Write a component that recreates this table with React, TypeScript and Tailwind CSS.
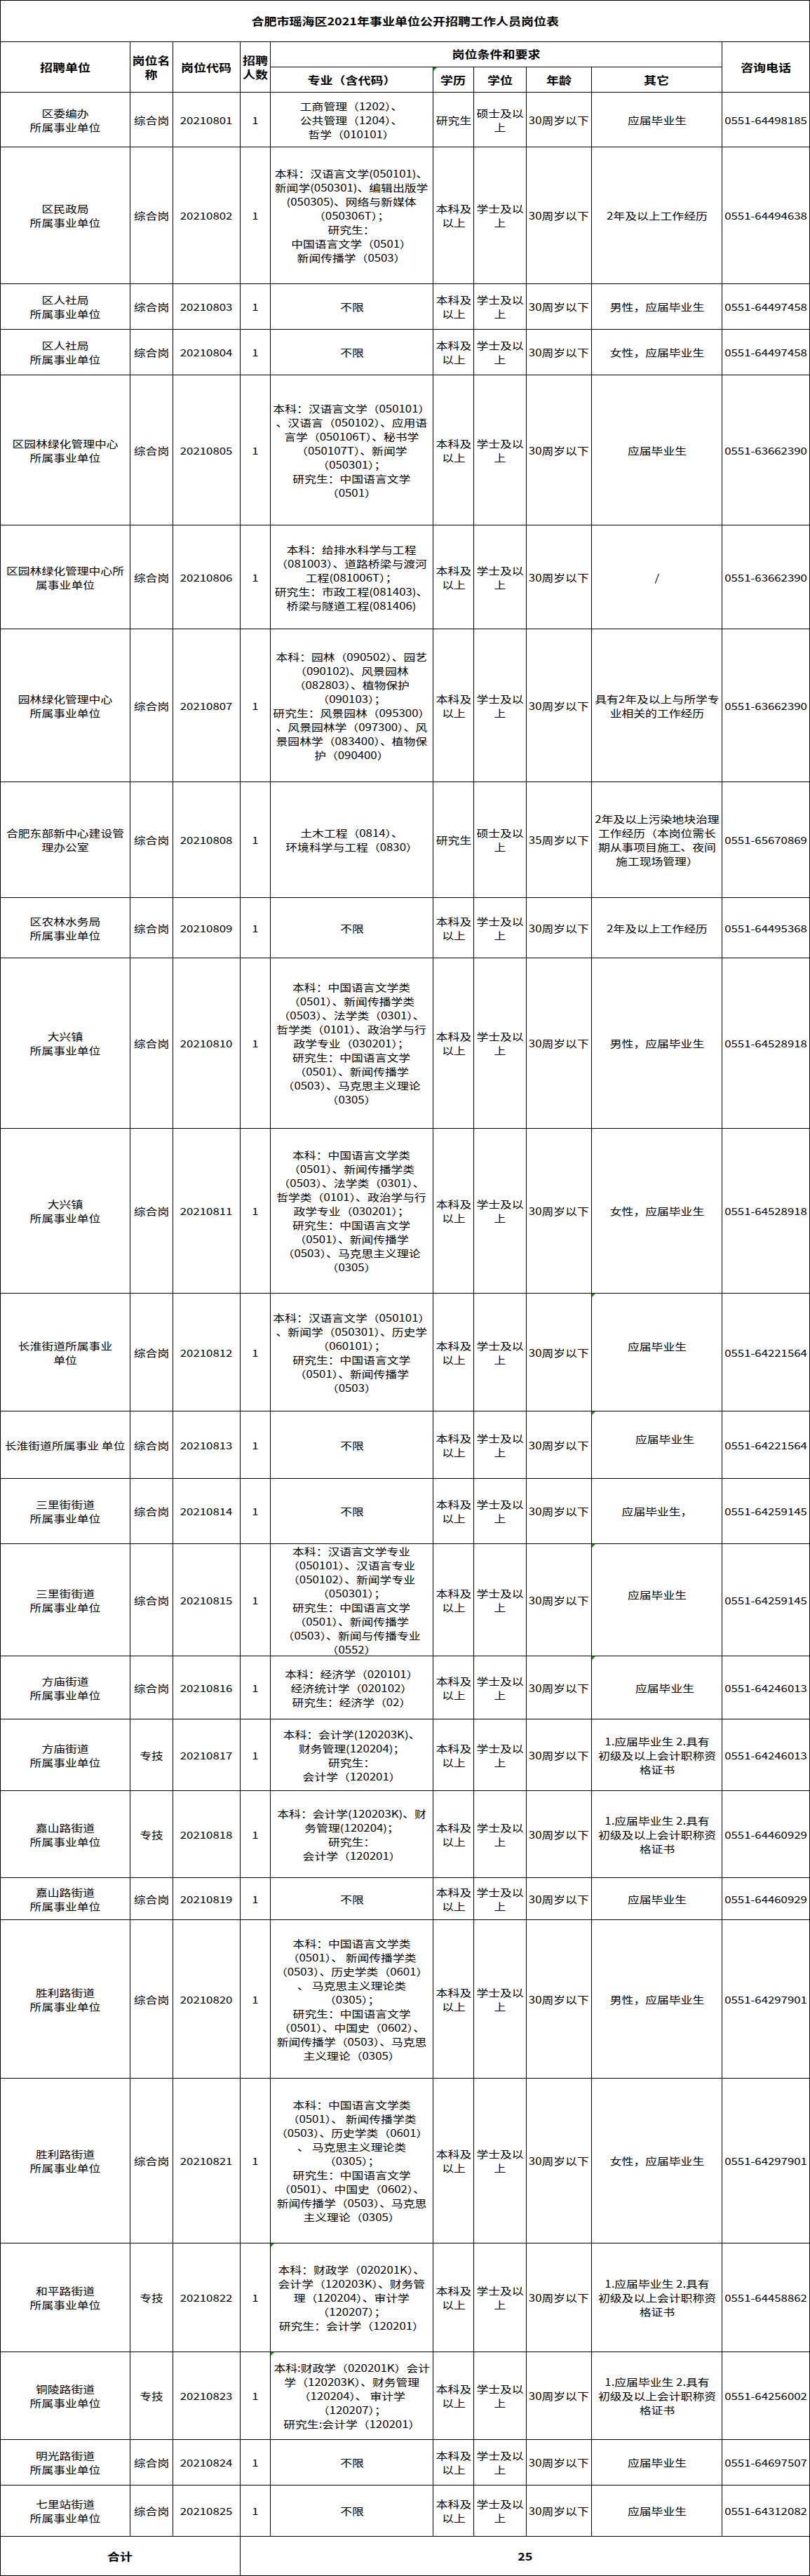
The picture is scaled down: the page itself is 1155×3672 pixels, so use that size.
import React from "react";
import clsx from "clsx";

type Row = {
  h: string;
  unit: string[];
  code: string;
  spec: string[];
  other: string[];
  phone: string;
  name?: string;
  edu?: string[];
  deg?: string[];
  age?: string;
  otherCls?: string;
  mark?: "spec" | "other";
};

const COLS = [
  "w-[185px]",
  "w-[61px]",
  "w-[96px]",
  "w-[43px]",
  "w-[232px]",
  "w-[58px]",
  "w-[75px]",
  "w-[93px]",
  "w-[186px]",
  "w-[125px]",
];

const SUOSHU = "所属事业单位";
const DAXING = [
  "本科：中国语言文学类",
  "（0501）、新闻传播学类",
  "（0503）、法学类（0301）、",
  "哲学类（0101）、政治学与行",
  "政学专业（030201）；",
  "研究生：中国语言文学",
  "（0501）、新闻传播学",
  "（0503）、马克思主义理论",
  "（0305）",
];
const SHENGLI = [
  "本科：中国语言文学类",
  "（0501）、 新闻传播学类",
  "（0503）、历史学类（0601）",
  "、 马克思主义理论类",
  "（0305）；",
  "研究生：中国语言文学",
  "（0501）、中国史（0602）、",
  "新闻传播学（0503）、马克思",
  "主义理论（0305）",
];
const KUAIJI = ["1.应届毕业生 2.具有", "初级及以上会计职称资", "格证书"];

const rows: Row[] = [
  {
    h: "h-[78px]",
    unit: ["区委编办", SUOSHU],
    code: "20210801",
    spec: ["工商管理（1202）、", "公共管理（1204）、", "哲学（010101）"],
    edu: ["研究生"],
    deg: ["硕士及以", "上"],
    other: ["应届毕业生"],
    phone: "0551-64498185",
  },
  {
    h: "h-[195px]",
    unit: ["区民政局", SUOSHU],
    code: "20210802",
    spec: [
      "本科：汉语言文学(050101)、",
      "新闻学(050301)、编辑出版学",
      "(050305)、网络与新媒体",
      "（050306T）；",
      "研究生：",
      "中国语言文学（0501）",
      "新闻传播学（0503）",
    ],
    other: ["2年及以上工作经历"],
    phone: "0551-64494638",
  },
  {
    h: "h-[65px]",
    unit: ["区人社局", SUOSHU],
    code: "20210803",
    spec: ["不限"],
    other: ["男性，应届毕业生"],
    phone: "0551-64497458",
  },
  {
    h: "h-[65px]",
    unit: ["区人社局", SUOSHU],
    code: "20210804",
    spec: ["不限"],
    other: ["女性，应届毕业生"],
    phone: "0551-64497458",
  },
  {
    h: "h-[214px]",
    unit: ["区园林绿化管理中心", SUOSHU],
    code: "20210805",
    spec: [
      "本科：汉语言文学（050101）",
      "、汉语言（050102）、应用语",
      "言学（050106T）、秘书学",
      "（050107T）、新闻学",
      "（050301）；",
      "研究生：中国语言文学",
      "（0501）",
    ],
    other: ["应届毕业生"],
    phone: "0551-63662390",
  },
  {
    h: "h-[148px]",
    unit: ["区园林绿化管理中心所", "属事业单位"],
    code: "20210806",
    spec: [
      "本科：给排水科学与工程",
      "（081003）、道路桥梁与渡河",
      "工程(081006T）；",
      "研究生：市政工程(081403)、",
      "桥梁与隧道工程(081406)",
    ],
    other: ["/"],
    phone: "0551-63662390",
  },
  {
    h: "h-[218px]",
    unit: ["园林绿化管理中心", SUOSHU],
    code: "20210807",
    spec: [
      "本科：园林（090502）、园艺",
      "（090102)、风景园林",
      "（082803）、植物保护",
      "（090103）；",
      "研究生：风景园林（095300）",
      "、风景园林学（097300）、风",
      "景园林学（083400）、植物保",
      "护（090400）",
    ],
    other: ["具有2年及以上与所学专", "业相关的工作经历"],
    phone: "0551-63662390",
  },
  {
    h: "h-[165px]",
    unit: ["合肥东部新中心建设管", "理办公室"],
    code: "20210808",
    spec: ["土木工程（0814）、", "环境科学与工程（0830）"],
    edu: ["研究生"],
    deg: ["硕士及以", "上"],
    age: "35周岁以下",
    other: ["2年及以上污染地块治理", "工作经历（本岗位需长", "期从事项目施工、夜间", "施工现场管理）"],
    phone: "0551-65670869",
  },
  {
    h: "h-[86px]",
    unit: ["区农林水务局", SUOSHU],
    code: "20210809",
    spec: ["不限"],
    other: ["2年及以上工作经历"],
    phone: "0551-64495368",
  },
  {
    h: "h-[243px]",
    unit: ["大兴镇", SUOSHU],
    code: "20210810",
    spec: DAXING,
    other: ["男性，应届毕业生"],
    phone: "0551-64528918",
  },
  {
    h: "h-[235px]",
    unit: ["大兴镇", SUOSHU],
    code: "20210811",
    spec: DAXING,
    other: ["女性，应届毕业生"],
    phone: "0551-64528918",
  },
  {
    h: "h-[168px]",
    unit: ["长淮街道所属事业", "单位"],
    code: "20210812",
    spec: [
      "本科：汉语言文学（050101）",
      "、新闻学（050301）、历史学",
      "（060101）；",
      "研究生：中国语言文学",
      "（0501）、新闻传播学",
      "（0503）",
    ],
    other: ["应届毕业生"],
    otherCls: "pb-[18px]",
    mark: "other",
    phone: "0551-64221564",
  },
  {
    h: "h-[96px]",
    unit: ["长淮街道所属事业 单位"],
    code: "20210813",
    spec: ["不限"],
    other: ["应届毕业生"],
    otherCls: "pb-[18px] pl-[22px]",
    mark: "other",
    phone: "0551-64221564",
  },
  {
    h: "h-[93px]",
    unit: ["三里街街道", SUOSHU],
    code: "20210814",
    spec: ["不限"],
    other: ["应届毕业生，"],
    phone: "0551-64259145",
  },
  {
    h: "h-[160px]",
    unit: ["三里街街道", SUOSHU],
    code: "20210815",
    spec: [
      "本科：汉语言文学专业",
      "（050101）、汉语言专业",
      "（050102）、新闻学专业",
      "（050301）；",
      "研究生：中国语言文学",
      "（0501）、新闻传播学",
      "（0503）、新闻与传播专业",
      "（0552）",
    ],
    other: ["应届毕业生"],
    otherCls: "pb-[16px]",
    mark: "other",
    phone: "0551-64259145",
  },
  {
    h: "h-[90px]",
    unit: ["方庙街道", SUOSHU],
    code: "20210816",
    spec: ["本科：经济学（020101）", "经济统计学（020102）", "研究生：经济学（02）"],
    other: ["应届毕业生"],
    otherCls: "pl-[22px]",
    mark: "other",
    phone: "0551-64246013",
  },
  {
    h: "h-[102px]",
    unit: ["方庙街道", SUOSHU],
    name: "专技",
    code: "20210817",
    spec: ["本科：会计学(120203K)、", "财务管理(120204)；", "研究生：", "会计学（120201）"],
    other: KUAIJI,
    phone: "0551-64246013",
  },
  {
    h: "h-[124px]",
    unit: ["嘉山路街道", SUOSHU],
    name: "专技",
    code: "20210818",
    spec: ["本科：会计学(120203K)、财", "务管理(120204)；", "研究生：", "会计学（120201）"],
    other: KUAIJI,
    phone: "0551-64460929",
  },
  {
    h: "h-[60px]",
    unit: ["嘉山路街道", SUOSHU],
    code: "20210819",
    spec: ["不限"],
    other: ["应届毕业生"],
    phone: "0551-64460929",
  },
  {
    h: "h-[226px]",
    unit: ["胜利路街道", SUOSHU],
    code: "20210820",
    spec: SHENGLI,
    other: ["男性，应届毕业生"],
    phone: "0551-64297901",
  },
  {
    h: "h-[235px]",
    unit: ["胜利路街道", SUOSHU],
    code: "20210821",
    spec: SHENGLI,
    other: ["女性，应届毕业生"],
    phone: "0551-64297901",
  },
  {
    h: "h-[155px]",
    unit: ["和平路街道", SUOSHU],
    name: "专技",
    code: "20210822",
    spec: [
      "本科：财政学（020201K）、",
      "会计学（120203K）、财务管",
      "理（120204）、审计学",
      "（120207）；",
      "研究生：会计学（120201）",
    ],
    other: KUAIJI,
    mark: "spec",
    phone: "0551-64458862",
  },
  {
    h: "h-[125px]",
    unit: ["铜陵路街道", SUOSHU],
    name: "专技",
    code: "20210823",
    spec: [
      "本科:财政学（020201K）会计",
      "学（120203K）、财务管理",
      "（120204）、 审计学",
      "（120207）；",
      "研究生:会计学（120201）",
    ],
    other: KUAIJI,
    mark: "spec",
    phone: "0551-64256002",
  },
  {
    h: "h-[65px]",
    unit: ["明光路街道", SUOSHU],
    code: "20210824",
    spec: ["不限"],
    other: ["应届毕业生"],
    phone: "0551-64697507",
  },
  {
    h: "h-[73px]",
    unit: ["七里站街道", SUOSHU],
    code: "20210825",
    spec: ["不限"],
    other: ["应届毕业生"],
    phone: "0551-64312082",
  },
];

function Mark() {
  return (
    <span className="absolute left-0 top-0 h-0 w-0 border-r-[5px] border-t-[5px] border-r-transparent border-t-[#009a00]" />
  );
}

function Cell({
  w,
  lines,
  className,
  bold,
  mark,
}: {
  w: string;
  lines: string[];
  className?: string;
  bold?: boolean;
  mark?: boolean;
}) {
  return (
    <div
      className={clsx(
        "relative flex shrink-0 items-center justify-center border-r border-black text-center",
        w,
        className
      )}
    >
      {mark && <Mark />}
      <div
        className={clsx(
          "whitespace-nowrap leading-5 [transform:scaleX(1.2)]",
          bold ? "text-[15px] font-bold" : "text-[14px]"
        )}
      >
        {lines.map((l, i) => (
          <div key={i}>{l}</div>
        ))}
      </div>
    </div>
  );
}

export default function App() {
  return (
    <div className="min-h-screen bg-white font-['Noto_Sans_CJK_SC',sans-serif] text-black">
      <div className="w-[1155px] border-l border-t border-black">
        {/* title */}
        <div className="flex h-[59px] items-center justify-center border-b border-r border-black">
          <div className="whitespace-nowrap text-[15px] font-bold [transform:scaleX(1.2)]">
            合肥市瑶海区2021年事业单位公开招聘工作人员岗位表
          </div>
        </div>

        {/* header */}
        <div className="flex h-[72px] border-b border-black">
          <Cell w={COLS[0]} lines={["招聘单位"]} bold />
          <Cell w={COLS[1]} lines={["岗位名", "称"]} bold />
          <Cell w={COLS[2]} lines={["岗位代码"]} bold />
          <Cell w={COLS[3]} lines={["招聘", "人数"]} bold />
          <div className="flex w-[644px] shrink-0 flex-col">
            <div className="flex h-[36px] items-center justify-center border-b border-r border-black">
              <div className="whitespace-nowrap text-[15px] font-bold [transform:scaleX(1.2)]">岗位条件和要求</div>
            </div>
            <div className="flex flex-1">
              <Cell w={COLS[4]} lines={["专业（含代码）"]} bold />
              <Cell w={COLS[5]} lines={["学历"]} bold mark />
              <Cell w={COLS[6]} lines={["学位"]} bold />
              <Cell w={COLS[7]} lines={["年龄"]} bold />
              <Cell w={COLS[8]} lines={["其它"]} bold />
            </div>
          </div>
          <Cell w={COLS[9]} lines={["咨询电话"]} bold />
        </div>

        {/* body */}
        {rows.map((r) => (
          <div key={r.code} className={clsx("flex border-b border-black", r.h)}>
            <Cell w={COLS[0]} lines={r.unit} />
            <Cell w={COLS[1]} lines={[r.name ?? "综合岗"]} />
            <Cell w={COLS[2]} lines={[r.code]} />
            <Cell w={COLS[3]} lines={["1"]} />
            <Cell w={COLS[4]} lines={r.spec} mark={r.mark === "spec"} />
            <Cell w={COLS[5]} lines={r.edu ?? ["本科及", "以上"]} />
            <Cell w={COLS[6]} lines={r.deg ?? ["学士及以", "上"]} />
            <Cell w={COLS[7]} lines={[r.age ?? "30周岁以下"]} />
            <Cell w={COLS[8]} lines={r.other} className={r.otherCls} mark={r.mark === "other"} />
            <Cell w={COLS[9]} lines={[r.phone]} />
          </div>
        ))}

        {/* total */}
        <div className="flex h-[56px] border-b border-black">
          <Cell w="w-[342px]" lines={["合计"]} bold />
          <Cell w="w-[812px]" lines={["25"]} bold />
        </div>
      </div>
    </div>
  );
}
